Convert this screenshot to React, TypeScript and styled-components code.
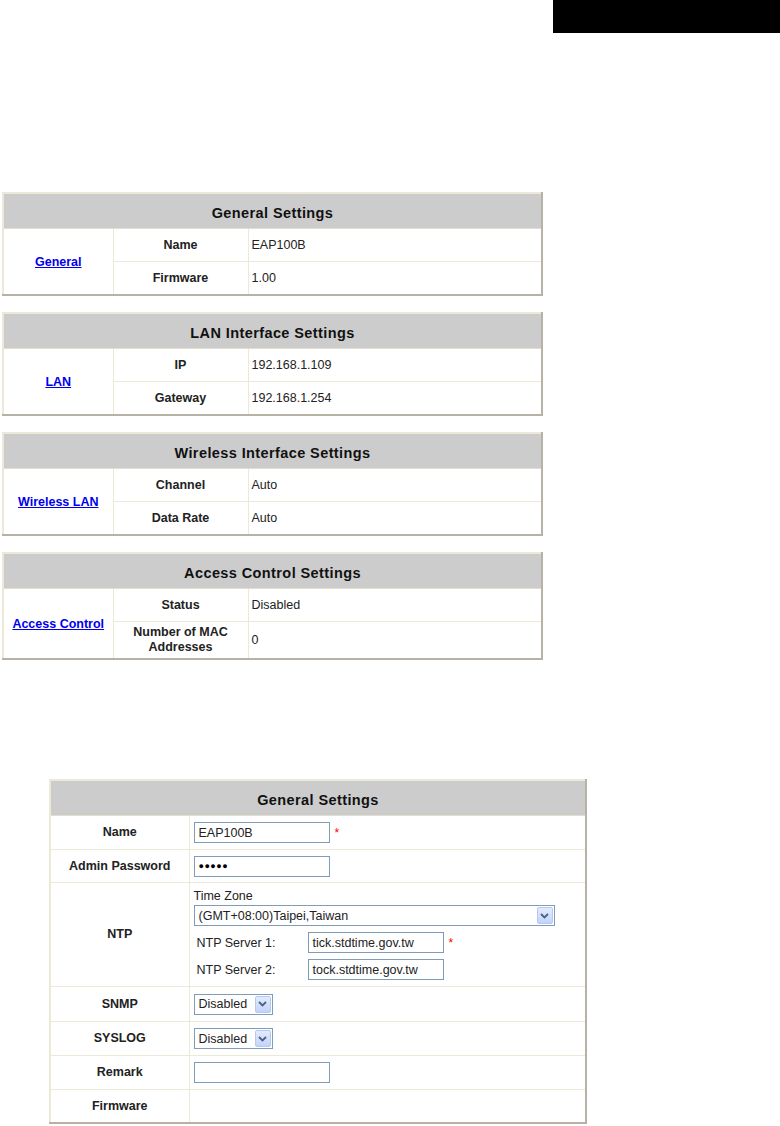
import React from 'react';
import styled, { createGlobalStyle } from 'styled-components';

const GlobalStyle = createGlobalStyle`
  html, body {
    margin: 0;
    padding: 0;
    background: #ffffff;
    font-family: "Liberation Sans", Arial, sans-serif;
  }
`;

interface SummaryRow {
  label: React.ReactNode;
  value: string;
  tall?: boolean;
}

interface Summary {
  title: string;
  link: string;
  rows: SummaryRow[];
}

const summaries: Summary[] = [
  {
    title: 'General Settings',
    link: 'General',
    rows: [
      { label: 'Name', value: 'EAP100B' },
      { label: 'Firmware', value: '1.00' },
    ],
  },
  {
    title: 'LAN Interface Settings',
    link: 'LAN',
    rows: [
      { label: 'IP', value: '192.168.1.109' },
      { label: 'Gateway', value: '192.168.1.254' },
    ],
  },
  {
    title: 'Wireless Interface Settings',
    link: 'Wireless LAN',
    rows: [
      { label: 'Channel', value: 'Auto' },
      { label: 'Data Rate', value: 'Auto' },
    ],
  },
  {
    title: 'Access Control Settings',
    link: 'Access Control',
    rows: [
      { label: 'Status', value: 'Disabled' },
      { label: <>Number of MAC<br />Addresses</>, value: '0', tall: true },
    ],
  },
];

const Page = styled.div`
  width: 780px;
  min-height: 1126px;
`;

const TopTab = styled.div`
  display: flex;
  justify-content: flex-end;
`;

const BlackTab = styled.div`
  width: 227px;
  height: 33px;
  background: #000;
`;

const SummaryList = styled.div`
  display: flex;
  flex-direction: column;
  gap: 16px;
  margin: 159px 0 0 2px;
  width: 541px;
`;

const Table = styled.table<{ $width: number }>`
  width: ${(p) => p.$width}px;
  border-collapse: collapse;
  border-style: solid;
  border-width: 2px;
  border-color: #ece9d8 #b6b3a6 #b6b3a6 #ece9d8;
  font-size: 12.5px;
  color: #222;
  table-layout: fixed;
`;

const HeadCell = styled.th`
  background: #cccccc;
  height: 30px;
  padding: 4px 0 0;
  font-size: 14.5px;
  letter-spacing: 0.4px;
  font-weight: bold;
  color: #111;
  text-align: center;
  border: 1px solid #e2dfd0;
`;

const LinkCell = styled.td`
  text-align: center;
  border: 1px solid #ece9d8;
`;

const SideLink = styled.a`
  color: #0000ee;
  font-weight: bold;
  text-decoration: underline;
  cursor: pointer;
`;

const LabelCell = styled.td<{ $height?: number }>`
  height: ${(p) => p.$height ?? 32}px;
  padding: 0 4px;
  text-align: center;
  font-weight: bold;
  color: #222;
  border: 1px solid #ece9d8;
  line-height: 15px;
`;

const ValueCell = styled.td`
  padding: 0 3px;
  text-align: left;
  color: #222;
  border: 1px solid #ece9d8;
  vertical-align: middle;
`;

const FormWrap = styled.div`
  margin: 119px 0 0 49px;
`;

const TextBox = styled.div<{ $width: number }>`
  display: inline-flex;
  align-items: center;
  box-sizing: border-box;
  width: ${(p) => p.$width}px;
  height: 21px;
  padding: 0 4px;
  border: 1px solid #7f9db9;
  background: #fff;
  font-size: 12.5px;
  color: #222;
  vertical-align: middle;
`;

const Dots = styled.span`
  font-size: 9px;
  letter-spacing: 0.5px;
  color: #000;
`;

const Required = styled.span`
  color: #ff0000;
  margin-left: 5px;
  font-size: 12px;
  vertical-align: middle;
`;

const Select = styled.div<{ $width: number }>`
  display: inline-flex;
  align-items: center;
  box-sizing: border-box;
  width: ${(p) => p.$width}px;
  height: 21px;
  border: 1px solid #7f9db9;
  background: #fff;
  font-size: 12.5px;
  color: #222;
  vertical-align: middle;
`;

const SelectText = styled.span`
  flex: 1;
  padding-left: 4px;
  white-space: nowrap;
  overflow: hidden;
`;

const SelectArrow = styled.span`
  display: flex;
  align-items: center;
  justify-content: center;
  width: 16px;
  height: 17px;
  margin-right: 1px;
  border: 1px solid #b7c9ef;
  border-radius: 2px;
  background: linear-gradient(180deg, #e2ebfd 0%, #c3d3fb 100%);
  box-sizing: border-box;
`;

const FormValue = styled.td`
  padding: 0 4px;
  border: 1px solid #ece9d8;
  vertical-align: middle;
`;

const NtpBox = styled.div`
  display: flex;
  flex-direction: column;
  align-items: flex-start;
  padding: 6px 0 6px;
  font-size: 12.5px;
  color: #222;
`;

const NtpCaption = styled.div`
  line-height: 14px;
  margin-bottom: 2px;
`;

const NtpLine = styled.div`
  display: flex;
  align-items: center;
  margin-top: 6px;
`;

const NtpLabel = styled.span`
  width: 111px;
  padding-left: 3px;
`;

const Arrow = () => (
  <SelectArrow>
    <svg width="9" height="6" viewBox="0 0 9 6">
      <path d="M1 1 L4.5 4.5 L8 1" fill="none" stroke="#4d6185" strokeWidth="1.8" />
    </svg>
  </SelectArrow>
);

const SummaryTable = ({ data }: { data: Summary }) => (
  <Table $width={541}>
    <colgroup>
      <col style={{ width: 110 }} />
      <col style={{ width: 135 }} />
      <col />
    </colgroup>
    <thead>
      <tr>
        <HeadCell colSpan={3}>{data.title}</HeadCell>
      </tr>
    </thead>
    <tbody>
      {data.rows.map((row, i) => (
        <tr key={i}>
          {i === 0 && (
            <LinkCell rowSpan={data.rows.length}>
              <SideLink>{data.link}</SideLink>
            </LinkCell>
          )}
          <LabelCell $height={row.tall ? 36 : 32}>{row.label}</LabelCell>
          <ValueCell>{row.value}</ValueCell>
        </tr>
      ))}
    </tbody>
  </Table>
);

export default function App() {
  return (
    <Page>
      <GlobalStyle />
      <TopTab>
        <BlackTab />
      </TopTab>

      <SummaryList>
        {summaries.map((s) => (
          <SummaryTable key={s.title} data={s} />
        ))}
      </SummaryList>

      <FormWrap>
        <Table $width={538}>
          <colgroup>
            <col style={{ width: 139 }} />
            <col />
          </colgroup>
          <thead>
            <tr>
              <HeadCell colSpan={2}>General Settings</HeadCell>
            </tr>
          </thead>
          <tbody>
            <tr>
              <LabelCell $height={33}>Name</LabelCell>
              <FormValue>
                <TextBox $width={136}>EAP100B</TextBox>
                <Required>*</Required>
              </FormValue>
            </tr>
            <tr>
              <LabelCell $height={32}>Admin Password</LabelCell>
              <FormValue>
                <TextBox $width={136}>
                  <Dots>●●●●●</Dots>
                </TextBox>
              </FormValue>
            </tr>
            <tr>
              <LabelCell $height={102}>NTP</LabelCell>
              <FormValue>
                <NtpBox>
                  <NtpCaption>Time Zone</NtpCaption>
                  <Select $width={361}>
                    <SelectText>(GMT+08:00)Taipei,Taiwan</SelectText>
                    <Arrow />
                  </Select>
                  <NtpLine>
                    <NtpLabel>NTP Server 1:</NtpLabel>
                    <TextBox $width={136}>tick.stdtime.gov.tw</TextBox>
                    <Required>*</Required>
                  </NtpLine>
                  <NtpLine>
                    <NtpLabel>NTP Server 2:</NtpLabel>
                    <TextBox $width={136}>tock.stdtime.gov.tw</TextBox>
                  </NtpLine>
                </NtpBox>
              </FormValue>
            </tr>
            <tr>
              <LabelCell $height={34}>SNMP</LabelCell>
              <FormValue>
                <Select $width={79}>
                  <SelectText>Disabled</SelectText>
                  <Arrow />
                </Select>
              </FormValue>
            </tr>
            <tr>
              <LabelCell $height={33}>SYSLOG</LabelCell>
              <FormValue>
                <Select $width={79}>
                  <SelectText>Disabled</SelectText>
                  <Arrow />
                </Select>
              </FormValue>
            </tr>
            <tr>
              <LabelCell $height={33}>Remark</LabelCell>
              <FormValue>
                <TextBox $width={136} />
              </FormValue>
            </tr>
            <tr>
              <LabelCell $height={32}>Firmware</LabelCell>
              <FormValue />
            </tr>
          </tbody>
        </Table>
      </FormWrap>
    </Page>
  );
}
